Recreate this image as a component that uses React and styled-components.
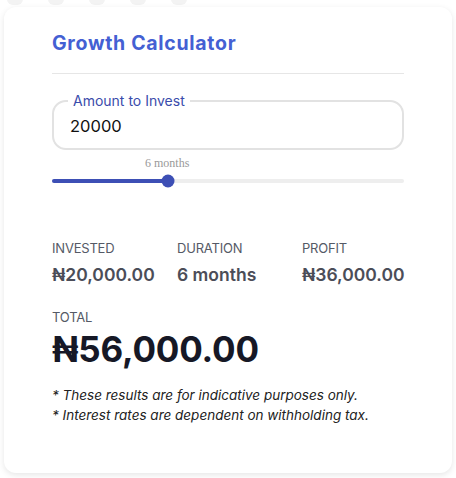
import React from "react";
import styled, { createGlobalStyle } from "styled-components";

const Global = createGlobalStyle`
  html, body { margin: 0; padding: 0; background: #ffffff; }
  body { font-family: Inter, "Noto Sans", "DejaVu Sans", sans-serif; }
`;

const Page = styled.div`
  width: 456px;
  height: 478px;
  overflow: hidden;
  background: #ffffff;
  display: flex;
  flex-direction: column;
`;

const Dots = styled.div`
  display: flex;
  gap: 25px;
  padding-left: 7px;
  margin-top: -7px;
  height: 12px;
`;

const Dot = styled.span`
  width: 16px;
  height: 12px;
  border-radius: 6px;
  background: #f3f3f3;
`;

const Card = styled.div`
  margin: 2px 4px 0 4px;
  height: 466px;
  box-sizing: border-box;
  background: #fff;
  border-radius: 12px;
  box-shadow: 0 2px 6px rgba(0, 0, 0, 0.1);
  padding: 24px 48px 0 48px;
  display: flex;
  flex-direction: column;
`;

const Title = styled.h1`
  margin: 0;
  font-family: Inter, "Noto Sans", sans-serif;
  font-weight: 700;
  font-size: 19.5px;
  letter-spacing: 0.7px;
  line-height: 24px;
  color: #4460d3;
  padding-bottom: 18px;
  border-bottom: 1px solid #e6e6e6;
`;

const Field = styled.div`
  position: relative;
  margin-top: 26px;
  height: 50px;
  box-sizing: border-box;
  border: 2px solid #e2e2e2;
  border-radius: 14px;
  display: flex;
  align-items: center;
  padding: 0 16px;
`;

const FieldLabel = styled.span`
  position: absolute;
  top: -9px;
  left: 14px;
  padding: 0 5px;
  background: #fff;
  font-size: 14px;
  line-height: 16px;
  color: #3a4cab;
`;

const FieldValue = styled.span`
  font-size: 16.5px;
  color: #111;
  margin-top: 2px;
`;

const Slider = styled.div`
  margin-top: 6px;
  display: flex;
  flex-direction: column;
`;

const SliderLabel = styled.div`
  font-family: "Liberation Serif", serif;
  font-size: 12px;
  line-height: 14px;
  color: #999;
  padding-left: 93px;
`;

const Track = styled.div`
  position: relative;
  margin-top: 9px;
  height: 4px;
  border-radius: 2px;
  background: #eeeeee;
`;

const Fill = styled.div`
  height: 100%;
  border-radius: 2px;
  background: #3d4fb5;
`;

const Thumb = styled.div`
  position: absolute;
  top: 50%;
  width: 13px;
  height: 13px;
  border-radius: 50%;
  background: #3d4fb5;
  transform: translate(-50%, -50%);
`;

const Stats = styled.div`
  margin-top: 57px;
  display: grid;
  grid-template-columns: 125px 125px 1fr;
`;

const Stat = styled.div`
  display: flex;
  flex-direction: column;
  gap: 8px;
`;

const Label = styled.div`
  font-size: 13px;
  line-height: 16px;
  color: #555a66;
  letter-spacing: -0.2px;
`;

const Value = styled.div`
  font-size: 17.5px;
  line-height: 22px;
  font-weight: 600;
  color: #4b4d58;
`;

const Total = styled.div`
  margin-top: 23px;
  display: flex;
  flex-direction: column;
  gap: 3px;
`;

const Big = styled.div`
  font-size: 35px;
  line-height: 42px;
  font-weight: 700;
  color: #161826;
  letter-spacing: -0.2px;
`;

const Notes = styled.div`
  margin-top: 15px;
  font-style: italic;
  font-size: 13.5px;
  line-height: 20px;
  color: #222;
`;

const stats = [
  { label: "INVESTED", value: "₦20,000.00" },
  { label: "DURATION", value: "6 months" },
  { label: "PROFIT", value: "₦36,000.00" },
];

export default function App() {
  const pct = 33;
  return (
    <Page>
      <Global />
      <Dots>
        {[0, 1, 2, 3, 4].map((i) => (
          <Dot key={i} />
        ))}
      </Dots>
      <Card>
        <Title>Growth Calculator</Title>
        <Field>
          <FieldLabel>Amount to Invest</FieldLabel>
          <FieldValue>20000</FieldValue>
        </Field>
        <Slider>
          <SliderLabel>6 months</SliderLabel>
          <Track>
            <Fill style={{ width: `${pct}%` }} />
            <Thumb style={{ left: `${pct}%` }} />
          </Track>
        </Slider>
        <Stats>
          {stats.map((s) => (
            <Stat key={s.label}>
              <Label>{s.label}</Label>
              <Value>{s.value}</Value>
            </Stat>
          ))}
        </Stats>
        <Total>
          <Label>TOTAL</Label>
          <Big>₦56,000.00</Big>
        </Total>
        <Notes>
          <div>* These results are for indicative purposes only.</div>
          <div>* Interest rates are dependent on withholding tax.</div>
        </Notes>
      </Card>
    </Page>
  );
}
